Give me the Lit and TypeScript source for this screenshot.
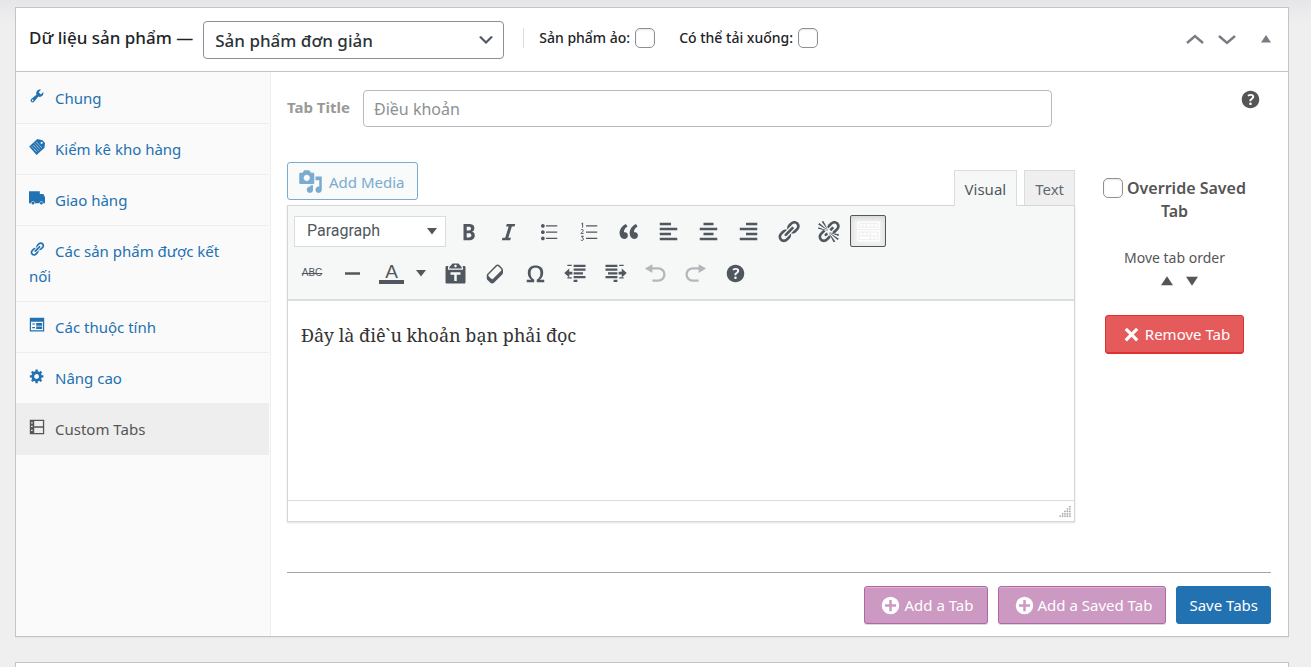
import { LitElement, html, css, svg } from "lit";
import { customElement } from "lit/decorators.js";
import { classMap } from "lit/directives/class-map.js";

const LINK = "M17.74 2.76c1.68 1.69 1.68 4.41 0 6.1l-1.53 1.52c-1.12 1.12-2.7 1.47-4.14 1.09l2.62-2.61.76-.77.76-.76c.84-.84.84-2.2 0-3.04-.84-.85-2.2-.85-3.04 0l-.77.76-3.38 3.38c-.37-1.44-.02-3.02 1.1-4.14l1.52-1.53c1.69-1.68 4.42-1.68 6.1 0zM8.59 13.43l5.34-5.34c.42-.42.42-1.1 0-1.52-.44-.43-1.13-.39-1.53 0l-5.33 5.34c-.42.42-.42 1.1 0 1.52.44.43 1.13.39 1.52 0zm-.76 2.29l4.14-4.15c.38 1.44.03 3.02-1.09 4.14l-1.52 1.53c-1.69 1.68-4.41 1.68-6.1 0-1.68-1.68-1.68-4.42 0-6.1l1.53-1.52c1.12-1.12 2.7-1.47 4.14-1.1l-4.14 4.15c-.85.84-.85 2.2 0 3.05.84.84 2.2.84 3.04 0z";

const ICONS: Record<string, any> = {
  wrench: svg`<path d="M16.68 9.77c-1.34 1.34-3.3 1.67-4.95.99l-5.41 6.52c-.99.99-2.59.99-3.58 0s-.99-2.59 0-3.57l6.52-5.42c-.68-1.65-.35-3.61.99-4.95 1.28-1.28 3.12-1.62 4.72-1.06l-2.89 2.89 2.82 2.82 2.86-2.87c.53 1.58.18 3.39-1.08 4.65zM3.81 16.21c.4.39 1.04.39 1.43 0 .4-.4.4-1.04 0-1.43-.39-.4-1.03-.4-1.43 0-.39.39-.39 1.03 0 1.43z"/>`,
  stock: svg`<path d="M10.500 0l6.500 1.500 3 3.500-.6 6L9.500 20 .2 9.500z"/><circle cx="15.800" cy="4.800" r="1.400" fill="#fafafa"/><path d="M3.500 9.300l6.300 7M5.500 7.500l6.300 7M7.500 5.700l6.300 7M9.500 3.900l6.300 7" stroke="#fafafa" stroke-width="1" stroke-dasharray="1.400 .7"/>`,
  truck: svg`<path d="M0 1.500h13.500V5h4.500l2 4v7.500h-2.100a2.400 2.400 0 0 0-4.800 0H7.400a2.400 2.400 0 0 0-4.800 0H0z"/><circle cx="5" cy="16.500" r="1.700"/><circle cx="15.500" cy="16.500" r="1.700"/>`,
  link: svg`<path d=${LINK}/>`,
  form: svg`<path fill-rule="evenodd" d="M1 1h18v17H1zM2.500 6v10.500h15V6z"/><path d="M4 8h3.500v1.500H4zM9 7.500h7.500v3.500H9zM4 12.500h3.500V14H4zM9 12h7.500v3H9z"/>`,
  gear: svg`<path d="M18 12h-2.18c-.17.7-.44 1.35-.81 1.93l1.54 1.54-2.1 2.1-1.54-1.54c-.58.36-1.23.63-1.91.79V19H8v-2.18c-.68-.16-1.33-.43-1.91-.79l-1.54 1.54-2.12-2.12 1.54-1.54c-.36-.58-.63-1.23-.79-1.91H1V9.03h2.17c.16-.7.44-1.35.8-1.94L2.43 5.55l2.1-2.1 1.54 1.54c.58-.37 1.24-.64 1.93-.81V2h3v2.18c.68.16 1.33.43 1.91.79l1.54-1.54 2.12 2.12-1.54 1.54c.36.59.64 1.24.8 1.94H18V12zm-8.5 1.500c1.66 0 3-1.34 3-3s-1.34-3-3-3-3 1.34-3 3 1.34 3 3 3z"/>`,
  tabs: svg`<path fill-rule="evenodd" d="M1 1h18v18H1zM6.500 2.600v6.400h10.900V2.600zM6.500 10.800v6.600h10.900v-6.600zM2.600 4v1.500h2V4zM2.600 8.500V10h2V8.500zM2.600 13.500V15h2v-1.500z"/>`,
  media: svg`<path d="M13 11V4c0-.55-.45-1-1-1h-1.67L9 1H5L3.67 3H2c-.55 0-1 .45-1 1v7c0 .55.45 1 1 1h10c.55 0 1-.45 1-1zM7 4.500c1.38 0 2.500 1.12 2.500 2.500S8.38 9.500 7 9.500 4.500 8.38 4.500 7 5.620 4.500 7 4.500zM14 6h5v10.500c0 1.38-1.12 2.500-2.500 2.500S14 17.88 14 16.500s1.12-2.500 2.500-2.500c.17 0 .34.02.5.05V9h-3V6zm-4 8.050V13h2v3.500c0 1.38-1.12 2.500-2.500 2.500S7 17.88 7 16.500 8.120 14 9.500 14c.17 0 .34.02.5.05z"/>`,
  bold: svg`<path d="M6 4v13h4.54c1.37 0 2.46-.33 3.26-1 .8-.66 1.2-1.58 1.2-2.77 0-.84-.17-1.51-.51-2.01s-.9-.85-1.67-1.03v-.09c.57-.1 1.02-.4 1.36-.9s.51-1.13.51-1.91c0-1.14-.39-1.98-1.17-2.500C12.75 4.26 11.500 4 9.780 4H6zm2.570 5.150V6.260h1.360c.73 0 1.270.11 1.610.32.34.22.51.58.51 1.070 0 .54-.16.92-.47 1.150s-.82.35-1.510.35h-1.500zm0 2.190h1.600c1.440 0 2.160.53 2.160 1.610 0 .6-.17 1.050-.51 1.340s-.86.43-1.570.43H8.570v-3.380z"/>`,
  italic: svg`<path d="M14.78 6h-2.130l-2.800 9h2.120l-.62 2H4.600l.62-2h2.140l2.800-9H8.030l.62-2h6.750z"/>`,
  ul: svg`<path d="M5.500 7C4.670 7 4 6.330 4 5.500 4 4.680 4.670 4 5.500 4 6.320 4 7 4.680 7 5.500 7 6.330 6.320 7 5.500 7zM8 5h9v1H8V5zm-2.500 7c-.83 0-1.500-.67-1.500-1.500C4 9.680 4.670 9 5.500 9c.82 0 1.500.68 1.500 1.500 0 .83-.68 1.500-1.500 1.500zM8 10h9v1H8v-1zm-2.500 7c-.83 0-1.500-.67-1.500-1.500 0-.82.67-1.500 1.500-1.500.82 0 1.500.68 1.500 1.500 0 .83-.68 1.500-1.500 1.500zM8 15h9v1H8v-1z"/>`,
  ol: svg`<path d="M8 5h9v1H8zM8 10h9v1H8zM8 15h9v1H8z"/><path d="M4.300 3.900l1-.7v3.700M3.900 8.900c.5-.8 2-.6 1.900.3 0 .8-1.300 1.300-1.900 2.300h2.200M4 13.800h1.900l-1 1.200c1.500 0 1.500 2.100-.1 2.100-.4 0-.7-.1-1-.3" fill="none" stroke="currentColor" stroke-width=".8"/>`,
  quote: svg`<path d="M9.490 13.220c0-.74-.2-1.380-.61-1.900-.62-.78-1.830-.88-2.530-.72-.29-1.650 1.110-3.750 2.920-4.650L7.880 4c-2.730 1.300-5.420 4.280-4.960 8.050C3.210 14.430 4.590 16 6.540 16c.85 0 1.560-.25 2.120-.75s.83-1.180.83-2.030zm8.050 0c0-.74-.2-1.380-.61-1.900-.63-.78-1.830-.88-2.530-.72-.29-1.650 1.110-3.750 2.920-4.650L15.930 4c-2.730 1.300-5.410 4.280-4.950 8.050.29 2.380 1.660 3.950 3.610 3.950.85 0 1.560-.25 2.120-.75s.83-1.180.83-2.030z"/>`,
  left: svg`<path d="M12 5V3H3v2h9zm5 4V7H3v2h14zm-5 4v-2H3v2h9zm5 4v-2H3v2h14z"/>`,
  center: svg`<path d="M14 5V3H6v2h8zm3 4V7H3v2h14zm-3 4v-2H6v2h8zm3 4v-2H3v2h14z"/>`,
  right: svg`<path d="M17 5V3H8v2h9zm0 4V7H3v2h14zm0 4v-2H8v2h9zm0 4v-2H3v2h14z"/>`,
  unlink: svg`<path d=${LINK}/><path d="M4 4l12 12" stroke="#f6f7f7" stroke-width="3.500"/><path d="M10 9.500L2 6.500l-.4 1.300zM9.800 9.400L2.800 3.200l-1.100 1.100zM9.800 9.200L6 1.500l-1.500.6zM10 10.500l8 3 .4-1.300zM10.200 10.600l7 6.200 1.100-1.100zM10.200 10.800l3.800 7.700 1.500-.6z"/>`,
  sink: svg`<path fill="#fff" d="M19 2v6H1V2h18zm-1 5V3H2v4h16zM5 4v2H3V4h2zm3 0v2H6V4h2zm3 0v2H9V4h2zm3 0v2h-2V4h2zm3 0v2h-2V4h2zm2 5v9H1V9h18zm-1 8v-7H2v7h16zM5 11v2H3v-2h2zm3 0v2H6v-2h2zm3 0v2H9v-2h2zm6 0v2h-5v-2h5zm-6 3v2H3v-2h8zm3 0v2h-2v-2h2zm3 0v2h-2v-2h2z"/>`,
  hr: svg`<path d="M4 9h12v2H4z"/>`,
  paste: svg`<path d="M12.380 2L15 5v1H5V5l2.640-3h4.740zM10 5c.55 0 1-.44 1-1 0-.55-.45-1-1-1s-1 .45-1 1c0 .56.45 1 1 1zm5.450-1H17c.55 0 1 .45 1 1v12c0 .56-.45 1-1 1H3c-.55 0-1-.44-1-1V5c0-.55.45-1 1-1h1.550L4 4.630V7h12V4.630zM14 11V9H6v2h3v5h2v-5h3z"/>`,
  eraser: svg`<path d="M14.290 4.590l1.100 1.110c.41.4.61.94.61 1.470v2.120c0 .53-.2 1.070-.61 1.470l-6.630 6.630c-.4.41-.94.61-1.470.61s-1.070-.2-1.470-.61l-1.110-1.100-1.100-1.110c-.41-.4-.61-.94-.61-1.470v-2.120c0-.54.2-1.070.61-1.480l6.630-6.620c.4-.41.94-.61 1.470-.61s1.060.2 1.470.61zm-6.210 9.700l6.420-6.420c.39-.39.39-1.030 0-1.430L12.360 4.300c-.19-.19-.45-.29-.72-.29s-.52.1-.71.29l-6.420 6.420c-.39.4-.39 1.040 0 1.430l2.140 2.140c.38.38 1.040.38 1.430 0z"/>`,
  omega: svg`<path d="M10 5.400c1.270 0 2.240.36 2.910 1.080.66.71 1 1.760 1 3.130 0 1.280-.23 2.370-.69 3.270-.47.89-1.270 1.520-2.220 2.120v2h6v-2h-3.690c.92-.64 1.620-1.340 2.120-2.340.49-1.010.74-2.130.74-3.350 0-1.780-.55-3.190-1.650-4.220S11.920 3.540 10 3.540s-3.430.53-4.520 1.570c-1.100 1.040-1.650 2.440-1.650 4.200 0 1.210.24 2.310.73 3.330.48 1.010 1.190 1.710 2.100 2.360H3v2h6v-2c-.98-.64-1.800-1.280-2.240-2.170-.45-.89-.67-1.960-.67-3.220 0-1.370.33-2.410 1-3.130C7.750 5.760 8.720 5.400 10 5.400z"/>`,
  outdent: svg`<path d="M1 9.600L5 6v2.500h2.500v2.200H5v2.500zM8.500 3H18v1.800H8.500zM8.500 6H18v1.800H8.500zM8.500 9H16v1.800H8.500zM8.500 12H18v1.800H8.500zM8.500 15h3v1.800h-3zM3.500 3h3.500v1H3.500zM3.500 13h3.500v1H3.500z"/>`,
  indent: svg`<path d="M19 9.600L15 6v2.500h-2.500v2.200H15v2.500zM2 3h9.500v1.800H2zM2 6h9.500v1.800H2zM4 9h7.500v1.800H4zM2 12h9.500v1.800H2zM8.500 15h3v1.800h-3zM13 3h3.500v1H13zM13 13h3.500v1H13z"/>`,
  undo: svg`<path d="M12 5H7.500V2.500L1.500 6l6 3.500V6.800H12c2.300 0 4.200 1.700 4.200 3.900s-1.900 4-4.200 4H7.500v1.800H12c3.400 0 6-2.600 6-5.800S15.400 5 12 5z"/>`,
  redo: svg`<path d="M8 5h4.500V2.500l6 3.500-6 3.500V6.800H8c-2.300 0-4.200 1.700-4.200 3.900s1.900 4 4.200 4h4.500v1.800H8c-3.400 0-6-2.600-6-5.800S4.600 5 8 5z"/>`,
  help: svg`<path d="M17 10c0-3.870-3.140-7-7-7-3.870 0-7 3.130-7 7s3.130 7 7 7c3.860 0 7-3.130 7-7zm-6.300 1.480H9.140v-.43c0-.38.08-.7.24-.98s.46-.57.88-.89c.41-.29.68-.53.81-.71.14-.18.2-.39.2-.62 0-.25-.09-.44-.28-.58-.19-.13-.45-.19-.79-.19-.58 0-1.250.19-2 .57l-.64-1.280c.87-.49 1.800-.74 2.770-.74.81 0 1.450.2 1.920.58.48.39.71.91.71 1.550 0 .43-.09.8-.29 1.110-.19.32-.57.67-1.110 1.060-.38.28-.61.49-.71.63-.1.15-.15.34-.15.57v.35zm-1.470 2.740c-.18-.17-.27-.42-.27-.73 0-.33.08-.58.26-.75s.43-.25.77-.25c.32 0 .57.09.75.26s.27.42.27.74c0 .3-.09.55-.27.72-.18.18-.43.27-.75.27-.33 0-.58-.09-.76-.26z"/>`,
  plus: svg`<path fill-rule="evenodd" d="M10 3a7 7 0 1 0 0 14 7 7 0 0 0 0-14zM9 5.500h2V9h3.500v2H11v3.500H9V11H5.500V9H9z"/>`,
  cross: svg`<path d="M4.500 6.300l1.800-1.800L10 8.200l3.700-3.700 1.800 1.800L11.800 10l3.700 3.700-1.800 1.800L10 11.800l-3.700 3.700-1.800-1.800L8.200 10z"/>`,
  down: svg`<path d="M5 6l5 5 5-5 2 1-7 7-7-7 2-1z"/>`,
  chevUp: svg`<path d="M2 14l8-7 8 7" fill="none" stroke="currentColor" stroke-width="2.400"/>`,
  chevDown: svg`<path d="M2 7l8 7 8-7" fill="none" stroke="currentColor" stroke-width="2.400"/>`,
  triUp: svg`<path d="M0 17 10 2l10 15z"/>`,
  triDown: svg`<path d="M0 3h20L10 18z"/>`,
  arrow: svg`<path d="M0 4h20L10 17z"/>`,
  grip: svg`<path d="M17 0h2v2h-2zM17 4h2v2h-2zM13 4h2v2h-2zM17 8h2v2h-2zM13 8h2v2h-2zM9 8h2v2H9zM17 12h2v2h-2zM13 12h2v2h-2zM9 12h2v2H9zM5 12h2v2H5zM17 16h2v2h-2zM13 16h2v2h-2zM9 16h2v2H9zM5 16h2v2H5zM1 16h2v2H1z" stroke="currentColor" stroke-width=".5"/>`,
};

const icon = (name: string, cls = "") =>
  html`<svg class="ic ${cls}" viewBox="0 0 20 20" fill="currentColor" aria-hidden="true">${ICONS[name]}</svg>`;

const NAV = [
  ["wrench", "Chung"],
  ["stock", "Kiểm kê kho hàng"],
  ["truck", "Giao hàng"],
  ["link", "Các sản phẩm được kết nối"],
  ["form", "Các thuộc tính"],
  ["gear", "Nâng cao"],
  ["tabs", "Custom Tabs"],
];

const ROW1 = [
  ["bold", "Bold"], ["italic", "Italic"], ["ul", "Bulleted list"], ["ol", "Numbered list"],
  ["quote", "Blockquote"], ["left", "Align left"], ["center", "Align center"],
  ["right", "Align right"], ["link", "Insert link"], ["unlink", "Remove link"], ["sink", "Toolbar toggle"],
];
const ROW2 = [
  ["paste", "Paste as text"], ["eraser", "Clear formatting"], ["omega", "Special character"],
  ["outdent", "Decrease indent"], ["indent", "Increase indent"], ["undo", "Undo"],
  ["redo", "Redo"], ["help", "Keyboard shortcuts"],
];

@customElement("app-root")
export class AppRoot extends LitElement {
  static styles = css`
    :host {
      display: flex;
      flex-direction: column;
      box-sizing: border-box;
      min-height: 100vh;
      padding: 7px 22px 0 15px;
      background: linear-gradient(#e6e6e9, #efefef 24px);
      font-family: "Noto Sans", "Open Sans", sans-serif;
      font-size: 15px;
      line-height: 25px;
      color: #555;
    }
    * { box-sizing: border-box; }
    button, input, select { font: inherit; color: inherit; margin: 0; }
    button { cursor: pointer; }
    .ic { width: 25px; height: 25px; flex: none; display: block; }
    .ic.s16 { width: 16px; height: 16px; }
    .ic.s12 { width: 12px; height: 12px; }
    .ic.s10 { width: 10px; height: 10px; }
    .ic.s20 { width: 20px; height: 20px; }

    .box { background: #fff; border: 1px solid #c3c4c7; box-shadow: 0 1px 1px rgba(0, 0, 0, 0.04); }
    .next { flex: 1 0 5px; margin-top: 25px; border-bottom: 0; }

    .head { display: flex; align-items: center; height: 64px; padding: 0 17px 4px 13px; border-bottom: 1px solid #c3c4c7; color: #1d2327; }
    .head h2 { margin: 0 10px 0 0; font-size: 17px; font-weight: 500; }
    .type { position: relative; display: flex; align-items: center; margin-top: 4px; }
    .type select { appearance: none; width: 301px; height: 38px; padding: 2px 30px 0 11px; border: 1px solid #8c8f94; border-radius: 4px; background: #fff; color: #2c3338; font-size: 17px; font-weight: 500; }
    .type .ic { position: absolute; right: 8px; color: #50575e; pointer-events: none; }
    .sep { width: 1px; height: 20px; margin: 0 15px 0 19px; background: #dcdcde; }
    .opt { display: flex; align-items: center; gap: 5px; margin-right: 24px; font-size: 14px; font-weight: 500; }
    .check { appearance: none; flex: none; width: 20px; height: 20px; border: 1px solid #8c8f94; border-radius: 5px; background: #fff; box-shadow: inset 0 1px 2px rgba(0, 0, 0, 0.1); }
    .handles { display: flex; align-items: center; margin-left: auto; padding-top: 3px; color: #787c82; }
    .handles button { display: flex; padding: 0; border: 0; background: none; }
    .handles button + button { margin-left: 12px; }
    .handles button:last-child { margin-left: 24px; }

    .body { display: grid; grid-template-columns: 255px minmax(0, 1fr); }
    .nav { margin: 0; padding: 1px 1px 0 0; list-style: none; background: #fafafa; border-right: 1px solid #eee; }
    .nav a { display: block; padding: 13px 40px 12px 13px; border-bottom: 1px solid #eee; color: #2271b1; text-decoration: none; }
    .nav .ic { display: inline-block; margin-right: 10px; vertical-align: 0; }
    .nav .on { background: #eee; color: #555; }

    .main { padding: 18px 17px 12px 16px; }
    .title { display: flex; align-items: flex-start; }
    .title label { width: 76px; line-height: 35px; color: #999; font-weight: 700; font-size: 15px; }
    .title input { flex: 1; min-width: 0; height: 37px; padding: 0 10px; border: 1px solid #b8babd; border-radius: 4px; background: #fff; font-size: 16px; }
    .title input::placeholder { color: #8d8f91; opacity: 1; }
    .title button { display: flex; margin: -3px 8px 0 186px; padding: 0; border: 0; background: none; color: #555; }

    .cols { display: grid; grid-template-columns: minmax(0, 1fr) 196px; padding: 35px 0 50px; border-bottom: 1px solid #a0a5aa; }
    .top { display: flex; align-items: flex-start; height: 43px; }
    .media { display: flex; align-items: center; gap: 6px; height: 38px; padding: 0 12px 0 10px; border: 1px solid #7aabd0; border-radius: 3px; background: #f9fafa; color: #7aabd0; }
    .media span { padding-top: 2px; }
    .tab { align-self: flex-end; height: 35px; padding: 2px 10px 0; border: 1px solid #dcdcde; border-bottom: 0; background: #efefef; color: #646970; }
    .tab.first { height: 36px; margin: 0 7px -1px auto; background: #f6f7f7; color: #50575e; z-index: 1; }

    .editor { border: 1px solid #d5d6d8; box-shadow: 0 1px 2px rgba(0, 0, 0, 0.12); }
    .tools { display: flex; flex-direction: column; gap: 10px; height: 95px; padding: 9px 4px 0; background: #f6f7f7; border-bottom: 2px solid #dcdede; color: #50575e; }
    .row { display: flex; align-items: center; height: 32px; }
    .row button { position: relative; display: flex; align-items: center; justify-content: center; width: 36px; height: 32px; margin: 0 2px; padding: 0; border: 1px solid transparent; border-radius: 2px; background: none; flex: none; }
    .row button.pressed { background: #f0f0f1; border-color: #50575e; box-shadow: inset 0 2px 5px rgba(0, 0, 0, 0.12); }
    .row button.off { color: #b4b7ba; }
    .row .split { width: 59px; justify-content: flex-start; gap: 12px; padding-left: 4px; }
    .para { position: relative; display: flex; align-items: center; margin: 0 2px; }
    .para select { appearance: none; width: 152px; height: 31px; padding: 0 24px 0 12px; border: 1px solid #dcdcde; border-radius: 0; background: #fff; font: 16px/20px Roboto, "Liberation Sans", sans-serif; }
    .para .ic { position: absolute; right: 9px; pointer-events: none; }
    .abc { font: 10px/12px "Liberation Sans", sans-serif; text-decoration: line-through; }
    .fore { width: 25px; height: 22px; border-bottom: 4px solid #50575e; font: 500 19px/19px "Liberation Sans", sans-serif; }
    .text { height: 199px; padding: 19px 13px; font: 18px/30px "Noto Serif", "Liberation Serif", serif; color: #333; }
    .status { display: flex; justify-content: flex-end; align-items: flex-end; height: 21px; padding: 3px; border-top: 1px solid #dcdcde; color: #a0a3a7; }

    .side { display: flex; flex-direction: column; align-items: center; padding: 15px 0 0 3px; text-align: center; }
    .over { width: 150px; color: #555; font-size: 16px; font-weight: 600; line-height: 23px; }
    .over .check { margin-right: 4px; vertical-align: -4px; }
    .move { margin-top: 22px; font-size: 14px; }
    .order { display: flex; gap: 13px; padding-left: 9px; }
    .order button { display: flex; padding: 5px 0; border: 0; background: none; color: #555; }
    .btn { display: flex; align-items: center; gap: 1px; height: 38px; padding: 0 13px; border: 1px solid; border-radius: 3px; color: #fff; font-size: 15px; }
    .remove { margin-top: 23px; height: 39px; background: #e55b5b; border-color: #dc3232; box-shadow: inset 0 -1px 0 #dc3232; }
    .pink { background: #cc99c2; border-color: #b366a4; box-shadow: inset 0 1px 0 #dbb4d4, 0 1px 0 rgba(0, 0, 0, 0.15); }
    .save { padding: 0 12px; background: #2271b1; border-color: #2271b1; }
    .foot { display: flex; justify-content: flex-end; gap: 10px; padding-top: 13px; }
  `;

  private tool([name, label]: string[]) {
    const cls = { pressed: name === "sink", off: name === "undo" || name === "redo" };
    return html`<button type="button" class=${classMap(cls)} aria-label=${label}>${icon(name)}</button>`;
  }

  render() {
    return html`
      <section class="box">
        <header class="head">
          <h2>Dữ liệu sản phẩm —</h2>
          <div class="type">
            <select aria-label="Dữ liệu sản phẩm"><option>Sản phẩm đơn giản</option></select>
            ${icon("down", "s20")}
          </div>
          <span class="sep"></span>
          <label class="opt">Sản phẩm ảo: <input class="check" type="checkbox" /></label>
          <label class="opt">Có thể tải xuống: <input class="check" type="checkbox" /></label>
          <div class="handles">
            <button type="button" aria-label="Move up">${icon("chevUp", "s20")}</button>
            <button type="button" aria-label="Move down">${icon("chevDown", "s20")}</button>
            <button type="button" aria-label="Toggle panel">${icon("triUp", "s10")}</button>
          </div>
        </header>
        <div class="body">
          <ul class="nav">
            ${NAV.map(([name, label]) => html`<li><a href="#" class=${classMap({ on: name === "tabs" })}>${icon(name, "s16")}${label}</a></li>`)}
          </ul>
          <div class="main">
            <div class="title">
              <label for="tab-title">Tab Title</label>
              <input id="tab-title" type="text" placeholder="Điều khoản" />
              <button type="button" aria-label="Help">${icon("help")}</button>
            </div>
            <div class="cols">
              <div>
                <div class="top">
                  <button type="button" class="media">${icon("media")}<span>Add Media</span></button>
                  <button type="button" class="tab first">Visual</button>
                  <button type="button" class="tab">Text</button>
                </div>
                <div class="editor">
                  <div class="tools">
                    <div class="row">
                      <div class="para">
                        <select aria-label="Format"><option>Paragraph</option></select>
                        ${icon("arrow", "s10")}
                      </div>
                      ${ROW1.map((t) => this.tool(t))}
                    </div>
                    <div class="row">
                      <button type="button" aria-label="Strikethrough"><span class="abc">ABC</span></button>
                      <button type="button" aria-label="Horizontal line">${icon("hr")}</button>
                      <button type="button" class="split" aria-label="Text color"><span class="fore">A</span>${icon("arrow", "s10")}</button>
                      ${ROW2.map((t) => this.tool(t))}
                    </div>
                  </div>
                  <div class="text">Đây là điê\`u khoản bạn phải đọc</div>
                  <div class="status">${icon("grip", "s12")}</div>
                </div>
              </div>
              <aside class="side">
                <label class="over"><input class="check" type="checkbox" />Override Saved Tab</label>
                <span class="move">Move tab order</span>
                <div class="order">
                  <button type="button" aria-label="Up">${icon("triUp", "s12")}</button>
                  <button type="button" aria-label="Down">${icon("triDown", "s12")}</button>
                </div>
                <button type="button" class="btn remove">${icon("cross")}Remove Tab</button>
              </aside>
            </div>
            <div class="foot">
              <button type="button" class="btn pink">${icon("plus")}Add a Tab</button>
              <button type="button" class="btn pink">${icon("plus")}Add a Saved Tab</button>
              <button type="button" class="btn save">Save Tabs</button>
            </div>
          </div>
        </div>
      </section>
      <section class="box next"></section>
    `;
  }
}
